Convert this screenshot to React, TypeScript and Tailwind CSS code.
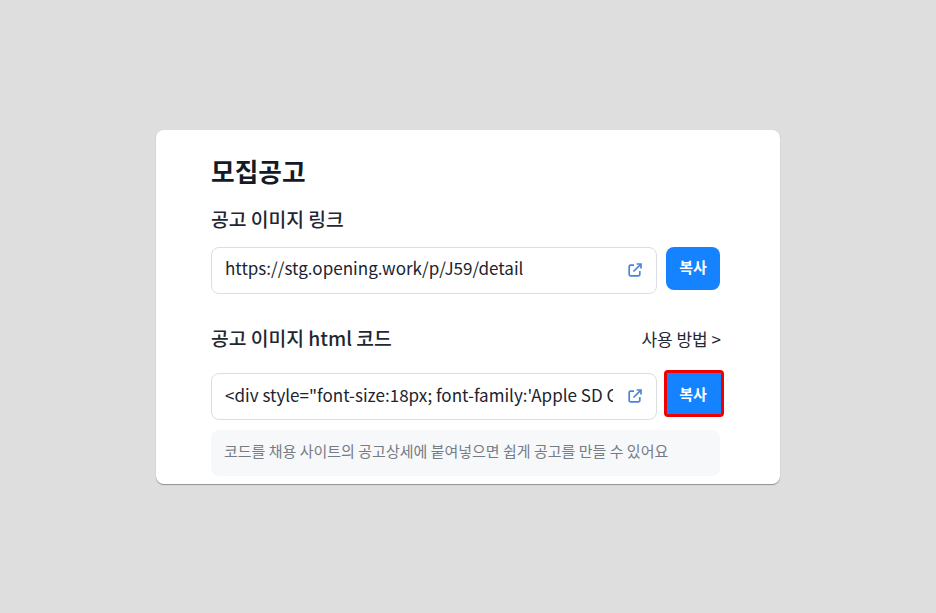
import React from "react";

function LinkIcon() {
  return (
    <svg width="16" height="16" viewBox="0 0 16 16" fill="none" stroke="#4a84dc" strokeWidth="1.7" className="shrink-0">
      <path d="M7 3.2H3.4C2.6 3.2 2.2 3.7 2.2 4.4v8.2c0 .7.4 1.2 1.2 1.2h8.2c.7 0 1.2-.5 1.2-1.2V9" />
      <path d="M6.5 9.5 13.6 2.4" />
      <path d="M9.6 2h4.4v4.4" />
    </svg>
  );
}

function Field({ text, pad }: { text: string; pad: string }) {
  return (
    <div className="flex h-[47px] w-[446px] shrink-0 items-center rounded-lg border border-[#dcdee1] bg-white pl-[13px] pr-[13px]">
      <div className={"flex-1 overflow-hidden whitespace-nowrap text-[17.05px] leading-6 text-[#1b2430] " + pad}>{text}</div>
      <div className="ml-[14px]"><LinkIcon /></div>
    </div>
  );
}

export default function App() {
  return (
    <div className="flex h-[613px] w-[936px] items-center justify-center bg-[#dedede] font-['Noto_Sans_CJK_KR',sans-serif]">
      <div className="flex h-[354px] w-[624px] flex-col rounded-lg bg-white pl-[55px] pr-[60px] pt-[23px] shadow-[0_1px_1px_rgba(0,0,0,0.35)]">
        <h1 className="text-[25.7px] font-bold leading-[36px] text-[#141b26]">모집공고</h1>
        <h2 className="mt-[17px] text-[19.3px] font-medium leading-[26px] text-[#1f2733]">공고 이미지 링크</h2>
        <div className="mt-[15px] flex items-start gap-[9px]">
          <Field text="https://stg.opening.work/p/J59/detail" pad="pb-[5px]" />
          <button className="h-[43px] w-[55px] rounded-lg bg-[#1583ff] pb-[3px] text-[15px] font-bold leading-none text-white">복사</button>
        </div>
        <div className="mt-[31px] flex items-center justify-between">
          <h2 className="text-[19.3px] font-medium leading-[26px] text-[#1f2733]">공고 이미지 html 코드</h2>
          <span className="-mr-px pt-[2px] text-[17px] leading-6 text-[#1f2733]">사용 방법 &gt;</span>
        </div>
        <div className="mt-[22px] flex items-start gap-[9px]">
          <Field text={"<div style=\"font-size:18px; font-family:'Apple SD Gothic Neo'"} pad="pb-[3px]" />
          <div className="-mt-[3px] -ml-[2px] -mr-[4px] h-[47px] w-[60px] shrink-0 rounded-[4px] border-[3px] border-[#f00000]">
            <button className="h-full w-full bg-[#1583ff] pr-[2px] text-[15px] font-semibold leading-none text-white">복사</button>
          </div>
        </div>
        <div className="mt-[10px] flex h-[46px] items-center rounded-lg bg-[#f7f8fa] pb-[2px] pl-[13px] text-[15px] text-[#757c86]">
          코드를 채용 사이트의 공고상세에 붙여넣으면 쉽게 공고를 만들 수 있어요
        </div>
      </div>
    </div>
  );
}
